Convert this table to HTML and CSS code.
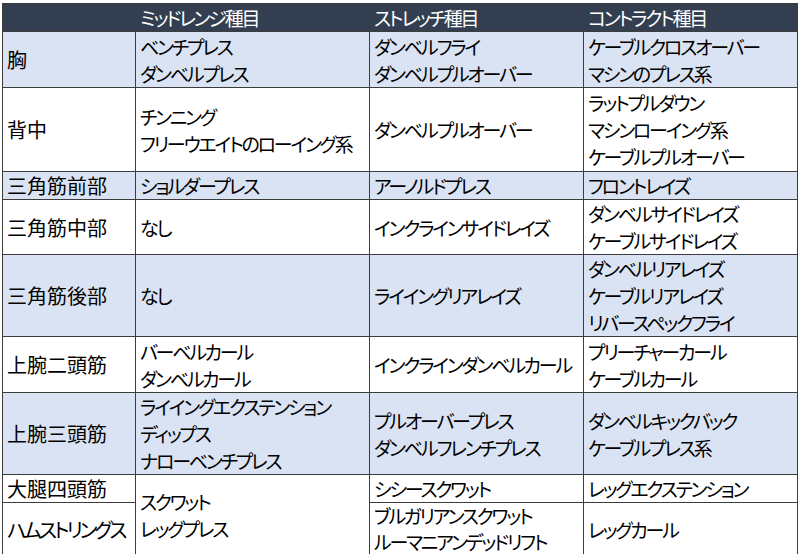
FILE: index.html
```html
<!DOCTYPE html>
<html lang="ja">
<head>
<meta charset="utf-8">
<title>トレーニング種目</title>
<link rel="stylesheet" href="styles.css">
</head>
<body>
<table class="grid">
  <colgroup>
    <col class="c1"><col class="c2"><col class="c3"><col class="c4">
  </colgroup>
  <thead>
    <tr class="h-head"><th></th><th>ミッドレンジ種目</th><th>ストレッチ種目</th><th>コントラクト種目</th></tr>
  </thead>
  <tbody>
    <tr class="blue h56"><td class="part">胸</td><td>ベンチプレス<br>ダンベルプレス</td><td>ダンベルフライ<br>ダンベルプルオーバー</td><td>ケーブルクロスオーバー<br>マシンのプレス系</td></tr>
    <tr class="h84"><td class="part">背中</td><td>チンニング<br>フリーウエイトのローイング系</td><td>ダンベルプルオーバー</td><td>ラットプルダウン<br>マシンローイング系<br>ケーブルプルオーバー</td></tr>
    <tr class="blue h25"><td class="part">三角筋前部</td><td>ショルダープレス</td><td>アーノルドプレス</td><td>フロントレイズ</td></tr>
    <tr class="h55"><td class="part">三角筋中部</td><td>なし</td><td>インクラインサイドレイズ</td><td>ダンベルサイドレイズ<br>ケーブルサイドレイズ</td></tr>
    <tr class="blue h82"><td class="part">三角筋後部</td><td>なし</td><td>ライイングリアレイズ</td><td>ダンベルリアレイズ<br>ケーブルリアレイズ<br>リバースペックフライ</td></tr>
    <tr class="h56"><td class="part">上腕二頭筋</td><td>バーベルカール<br>ダンベルカール</td><td>インクラインダンベルカール</td><td>プリーチャーカール<br>ケーブルカール</td></tr>
    <tr class="blue h81"><td class="part">上腕三頭筋</td><td>ライイングエクステンション<br>ディップス<br>ナローベンチプレス</td><td>プルオーバープレス<br>ダンベルフレンチプレス</td><td>ダンベルキックバック<br>ケーブルプレス系</td></tr>
    <tr class="h27"><td class="part">大腿四頭筋</td><td rowspan="2">スクワット<br>レッグプレス</td><td>シシースクワット</td><td>レッグエクステンション</td></tr>
    <tr class="h54"><td class="part kana">ハムストリングス</td><td class="tight">ブルガリアンスクワット<br>ルーマニアンデッドリフト</td><td>レッグカール</td></tr>
  </tbody>
</table>
</body>
</html>
```
FILE: styles.css
```css
html, body {
  margin: 0;
  background: #ffffff;
}
body {
  padding: 3px 0 0 2px;
  font-family: "Noto Sans CJK JP", "Noto Sans", sans-serif;
  font-size: 19px;
  font-feature-settings: "palt";
  color: #000000;
}
.grid {
  border-collapse: collapse;
  table-layout: fixed;
  width: 795px;
  border-left: 1px solid #9a9a9a;
  border-bottom: 2px solid #a8a8a8;
  border-top: 1px solid #9a9a9a;
}
.c1 { width: 133px; }
.c2 { width: 234px; }
.c3 { width: 214px; }
.c4 { width: 214px; }
.grid th, .grid td {
  border: 1px solid #3c3c3c;
  padding: 0 4px;
  text-align: left;
  vertical-align: middle;
  line-height: 27px;
  white-space: nowrap;
  letter-spacing: -2.2px;
}
.grid th {
  background: #333f50;
  color: #ffffff;
  font-weight: normal;
}
.grid td.part {
  font-size: 20px;
  letter-spacing: 0;
}
.grid td.part.kana {
  letter-spacing: -3px;
}
.grid td.tight {
  line-height: 26px;
}
.grid tr.blue td { background: #dae3f3; }
.h-head { height: 28px; }
.h25 { height: 25px; }
.h27 { height: 27px; }
.h54 { height: 54px; }
.h55 { height: 55px; }
.h56 { height: 56px; }
.h81 { height: 81px; }
.h82 { height: 82px; }
.h84 { height: 84px; }
```
